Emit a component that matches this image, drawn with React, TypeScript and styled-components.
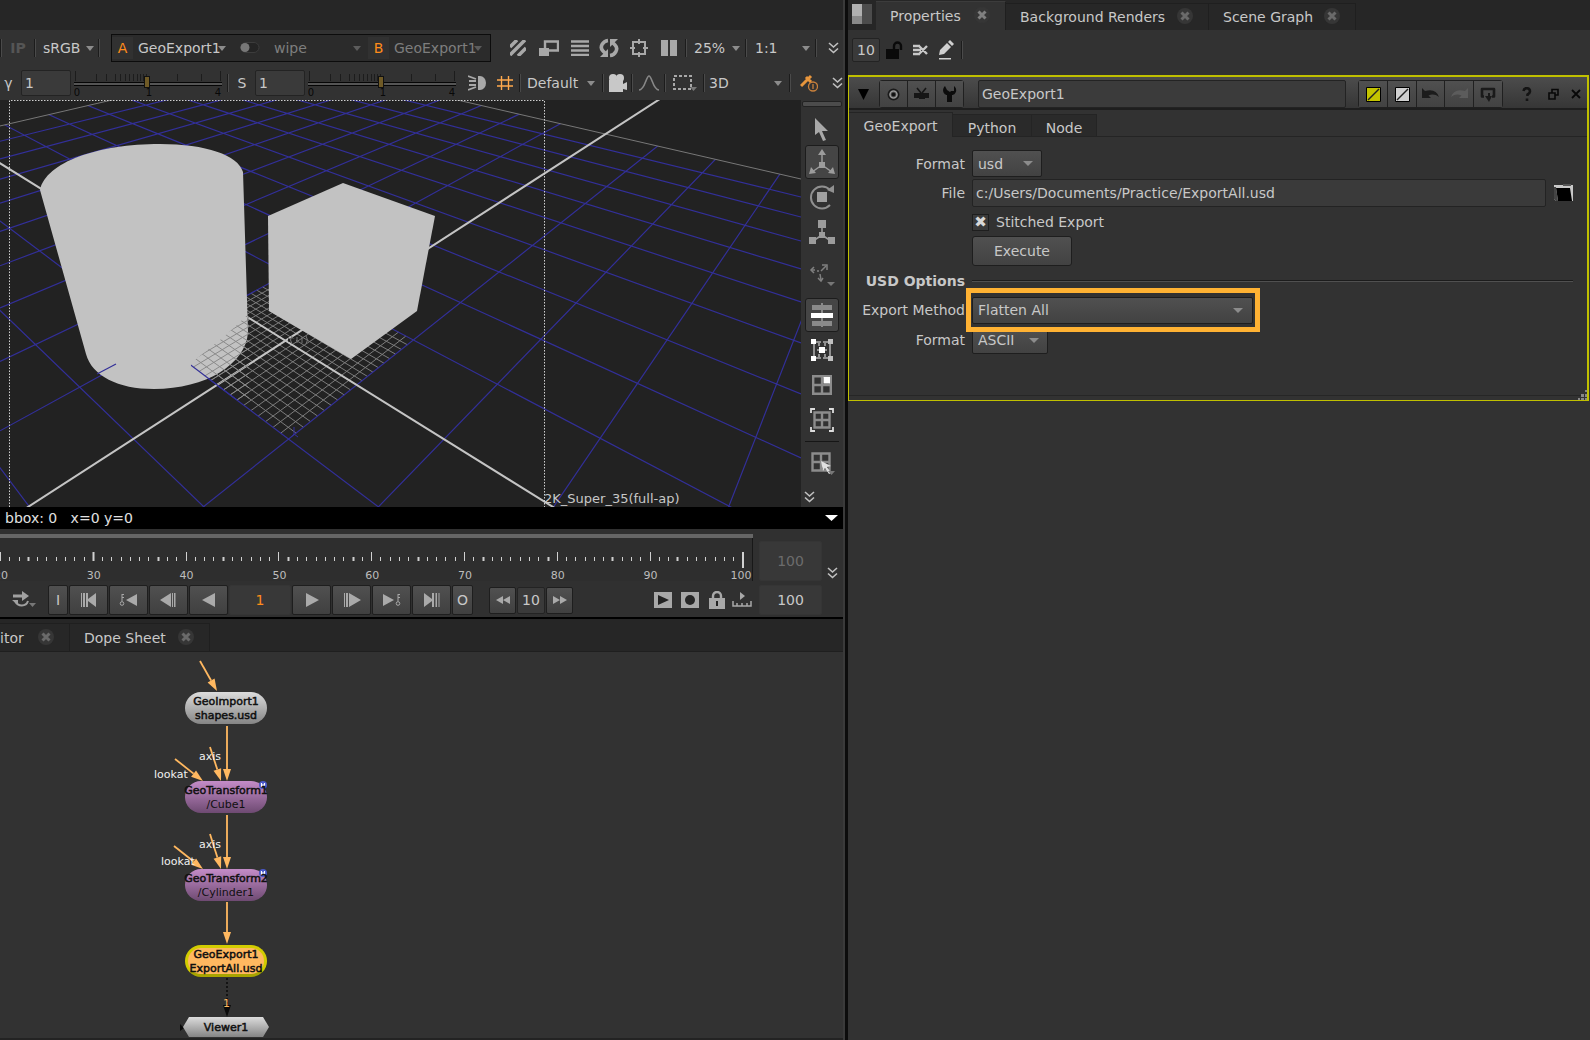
import React from 'react';
import styled, { createGlobalStyle, css } from 'styled-components';

const FONT = '"DejaVu Sans", sans-serif';
const c = {
  bg: '#323232',
  dark: '#262626',
  view: '#222222',
  line: '#1e1e1e',
  text: '#c8c8c8',
  dim: '#7e7e7e',
  icon: '#a8a8a8',
  orange: '#ff8c1a',
  amber: '#ffb860',
  yellow: '#c0c000',
};

const Global = createGlobalStyle`
  * { box-sizing: border-box; }
  body { margin: 0; background: ${c.bg}; color: ${c.text}; font: 14px/20px ${FONT}; overflow: hidden; }
  button, input, select { font: inherit; color: inherit; margin: 0; }
  svg { display: block; flex: none; }
`;

const Page = styled.main`
  display: grid;
  grid-template-columns: minmax(0, 848fr) minmax(0, 742fr);
  min-height: 100vh;
`;
const LeftPane = styled.section`
  display: flex;
  flex-direction: column;
  border-right: 3px solid #0c0c0c;
  box-shadow: inset -2px 0 0 #3a3a3a;
  padding-right: 2px;
  min-width: 0;
`;
const RightPane = styled.section`
  display: flex;
  flex-direction: column;
  min-width: 0;
`;
const TopStrip = styled.div`
  height: 30px;
  background: ${c.dark};
`;
const Toolbar = styled.div<{ $h: number; $pb?: number }>`
  display: flex;
  align-items: center;
  height: ${p => p.$h}px;
  padding-bottom: ${p => p.$pb ?? 0}px;
  background: ${c.bg};
`;
const Slot = styled.div<{ $w: number; $left?: boolean }>`
  display: flex;
  flex: 0 0 ${p => p.$w}px;
  align-items: center;
  justify-content: ${p => (p.$left ? 'flex-start' : 'center')};
`;
const Grow = styled.div`
  flex: 1;
`;
const Sep = styled.div`
  flex: 0 0 2px;
  height: 18px;
  border-left: 1px solid #1c1c1c;
  border-right: 1px solid #4a4a4a;
`;
const IconButton = styled.button<{ $w: number }>`
  display: flex;
  flex: 0 0 ${p => p.$w}px;
  align-items: center;
  justify-content: center;
  height: 28px;
  padding: 0;
  border: 0;
  background: none;
  color: ${c.icon};
`;
const Ghost = styled.span`
  font-weight: bold;
  color: #555;
`;
const InputGroup = styled.div`
  display: flex;
  align-items: center;
  flex: 0 0 380px;
  height: 28px;
  border: 1px solid #0c0c0c;
  background: #2b2b2b;
`;
const Channel = styled.div`
  flex: 0 0 21px;
  height: 22px;
  line-height: 23px;
  text-align: center;
  color: ${c.orange};
  background: #313131;
`;

const SelectBox = styled.span<{ $w: number; $raised?: boolean; $dim?: boolean; $h: number }>`
  display: grid;
  flex: 0 0 ${p => p.$w}px;
  width: ${p => p.$w}px;
  height: ${p => p.$h}px;
  align-items: center;
  color: ${p => (p.$dim ? c.dim : c.text)};
  ${p =>
    p.$raised &&
    css`
      border: 1px solid #1e1e1e;
      border-radius: 2px;
      background: linear-gradient(#505050, #424242);
    `}
`;
const Select = styled.select<{ $pad: number }>`
  grid-area: 1 / 1;
  width: 100%;
  height: 100%;
  appearance: none;
  border: 0;
  padding: 0 0 0 ${p => p.$pad}px;
  background: none;
  text-overflow: clip;
`;
const CaretHold = styled.span<{ $r: number }>`
  grid-area: 1 / 1;
  justify-self: end;
  margin-right: ${p => p.$r}px;
  pointer-events: none;
`;
const Caret = ({ color = '#8c8c8c', w = 8 }: { color?: string; w?: number }) => (
  <svg width={w} height="5" viewBox="0 0 8 5" preserveAspectRatio="none"><path d="M0 0h8L4 5z" fill={color} /></svg>
);
function Drop(p: { id?: string; label?: string; value: string; w: number; h?: number; pad?: number; r?: number; raised?: boolean; dim?: boolean }) {
  return (
    <SelectBox $w={p.w} $h={p.h ?? 26} $raised={p.raised} $dim={p.dim}>
      <Select id={p.id} aria-label={p.label} $pad={p.pad ?? 0} defaultValue={p.value}>
        <option>{p.value}</option>
      </Select>
      <CaretHold $r={p.r ?? 0}><Caret color={p.dim ? '#5c5c5c' : '#8c8c8c'} w={p.raised ? 10 : 8} /></CaretHold>
    </SelectBox>
  );
}

const Field = styled.input<{ $w?: number; $h?: number; $center?: boolean; $tone?: string }>`
  ${p => (p.$w ? css`flex: 0 0 ${p.$w}px; width: ${p.$w}px;` : css`flex: 1; min-width: 0;`)}
  height: ${p => p.$h ?? 26}px;
  border: 1px solid #232323;
  border-radius: 2px;
  padding: 0 3px;
  background: #3a3a3a;
  color: ${p => p.$tone ?? c.text};
  text-align: ${p => (p.$center ? 'center' : 'left')};
`;
const FlatField = styled(Field)`
  border-color: #353535;
  background: #383838;
`;
const SliderBox = styled.div`
  display: grid;
  flex: 0 0 148px;
`;
const SliderArt = styled.svg`
  grid-area: 1 / 1;
`;
const Range = styled.input`
  grid-area: 1 / 1;
  width: 100%;
  height: 28px;
  margin: 0;
  opacity: 0;
`;
function Slider({ label }: { label: string }) {
  const ticks = [1, 22, 32, 41, 46, 51, 55, 59, 63, 66, 69, 72, 103, 127, 146];
  return (
    <SliderBox>
      <SliderArt width="148" height="28" viewBox="0 0 148 28">
        {ticks.map((x, i) => (
          <path key={x} d={`M${x + 0.5} ${i === 0 || x === 146 ? 2 : 5}V12`} stroke="#1c1c1c" />
        ))}
        <path d="M0 13h148v4H0z" fill="#555" />
        <path d="M0 13.500h148M0 16.500h148" stroke="#050505" />
        <rect x="70.500" y="7.500" width="5" height="11" fill="#6f5a26" stroke="#111" />
        <g fontSize="10" fill="#080808" fontFamily={FONT} textAnchor="middle">
          <text x="3" y="27">0</text>
          <text x="75" y="27">1</text>
          <text x="144" y="27">4</text>
        </g>
      </SliderArt>
      <Range type="range" aria-label={label} min={0} max={4} defaultValue={1} />
    </SliderBox>
  );
}

const Chevrons = () => (
  <svg width="11" height="12" viewBox="0 0 11 12" fill="none" stroke="#c0c0c0" strokeWidth="1.600"><path d="M1 1l4.500 4L10 1M1 6.500l4.500 4 4.500-4" /></svg>
);

/* ---------- 3D viewport ---------- */
const ViewerRow = styled.div`
  display: flex;
  height: 407px;
`;
const Viewport = styled.svg`
  flex: 1 1 0;
  min-width: 0;
  height: 407px;
  background: ${c.view};
`;
const ToolColumn = styled.div`
  display: flex;
  flex: 0 0 42px;
  flex-direction: column;
  align-items: center;
  background: ${c.bg};
`;
const Tool = styled.button<{ $on?: boolean; $h: number }>`
  display: flex;
  flex: 0 0 ${p => p.$h}px;
  width: 34px;
  align-items: center;
  justify-content: center;
  padding: 0;
  border: 1px solid ${p => (p.$on ? '#1c1c1c' : 'transparent')};
  border-radius: 3px;
  background: ${p => (p.$on ? '#454545' : 'none')};
`;
const Handle = styled.div`
  flex: 0 0 6px;
  width: 40px;
  margin: 1px 0 6px;
  border-radius: 2px;
  border: 1px solid #222;
  background: #4c4c4c;
`;
const ToolRule = styled.div`
  flex: 0 0 1px;
  width: 34px;
  margin: 3px 0;
  background: #161616;
`;
const Spacer = styled.div<{ $h: number }>`
  flex: 0 0 ${p => p.$h}px;
`;
const MoreTools = styled.button`
  align-self: flex-start;
  padding: 0 0 0 3px;
  border: 0;
  background: none;
`;

/* Ground plane: both line families run to their own vanishing point. */
const VP_U = { x: 965, y: -98 };
const VP_V = { x: -430, y: -104 };
const uY = (u: number) => VP_U.y + 1 / (0.001605 - (u > 0 ? 0.0003 : 0.000286) * u);
const V_EDGE = [661, 544, 458, 394, 343, 302, 269, 241, 217, 197, 179];
function vY(v: number) {
  if (v >= 0) return VP_V.y + 1 / (0.001307 - 0.000232 * v);
  const i = Math.min(9, Math.floor(-v));
  return V_EDGE[i] + (V_EDGE[i + 1] - V_EDGE[i]) * (-v - i);
}
const uSlope = (u: number) => (VP_U.y - uY(u)) / VP_U.x;
const vSlope = (v: number) => (vY(v) - VP_V.y) / (801 - VP_V.x);
function cross(u: number, v: number): [number, number] {
  const a = uSlope(u);
  const b = vSlope(v);
  const x = (uY(u) - VP_V.y + b * VP_V.x) / (b - a);
  return [x, uY(u) + a * x];
}
const uLine = (u: number) => `M0 ${uY(u)}L965 ${VP_U.y}`;
const vLine = (v: number) => `M-430 ${VP_V.y}L801 ${vY(v)}`;
const seg = (a: [number, number], b: [number, number]) => `M${a[0]} ${a[1]}L${b[0]} ${b[1]}`;
const range = (a: number, b: number) => Array.from({ length: b - a + 1 }, (_, i) => a + i);

function Scene() {
  const far = cross(-10, -10);
  const blueU = range(-9, 4).filter(u => u !== 0).map(uLine).join('');
  const blueV = range(-9, 4).filter(v => v !== 0).map(vLine).join('');
  const fine = range(-9, 9)
    .map(i => i / 10)
    .map(t => seg(cross(t, -1), cross(t, 1)) + seg(cross(-1, t), cross(1, t)))
    .join('');
  return (
    <Viewport viewBox="0 100 801 407" preserveAspectRatio="xMinYMin slice" role="img" aria-label="3D view">
      <defs>
        <clipPath id="floor">
          <path d={`M0 ${uY(-10)}L${far[0]} ${far[1]}L801 ${vY(-10)}V507H0z`} />
        </clipPath>
        <clipPath id="front">
          <path d="M191 363L220 340 236 326 249 313V400H190z" />
        </clipPath>
      </defs>
      <g clipPath="url(#floor)" fill="none">
        <path d={fine} stroke="#7c7c7c" strokeWidth="1" />
        <path d={blueU + blueV} stroke="#322f98" strokeWidth="1.200" />
      </g>
      <path d={uLine(-10) + vLine(-10)} stroke="#777" />
      <path d={uLine(0) + vLine(0)} stroke="#c4c4c4" strokeWidth="2" />
      <g fill="#c2c2c2">
        <path d="M40 190C46 162 98 144 160 144C206 144 238 155 243 172L248 332C246 364 206 389 154 389C118 389 92 376 86 354Z" />
        <path d="M343 183L435 216 417 311 351 359 269 311 268 216Z" />
      </g>
      <g clipPath="url(#front)" fill="none">
        <path d={fine} stroke="#8a8a8a" />
        <path d={vLine(1)} stroke="#322f98" strokeWidth="1.200" />
      </g>
      <path d="M97 374L116 364" stroke="#322f98" strokeWidth="1.200" />
      <path d="M294 427V434L291 437M298 437L294 434" stroke="#322f98" fill="none" />
      <path d="M288 340h8" stroke={c.view} strokeWidth="3" />
      <path d="M292 336q-3 4 0 8M297 337v6M302 337v6M306 336q3 4 0 8" stroke="#777" fill="none" />
      <path d="M9.500 507V100.500H544.500V507" fill="none" stroke="#d0d0d0" strokeDasharray="1.500 1.500" />
      <text x="544" y="503" fontSize="13" fill={c.text} fontFamily={FONT}>2K_Super_35(full-ap)</text>
    </Viewport>
  );
}

const StatusBar = styled.div`
  display: flex;
  align-items: center;
  justify-content: space-between;
  height: 22px;
  padding: 0 5px;
  background: #000;
  color: #e0e0e0;
  white-space: pre;
`;

/* ---------- timeline ---------- */
const Timeline = styled.div`
  display: grid;
  grid-template-columns: minmax(0, 753fr) 70px 20px;
  grid-template-rows: 54px 34px;
  align-items: center;
  border-bottom: 2px solid #000;
  background: #303030;
  height: 90px;
`;
const RulerSvg = styled.svg`
  width: 100%;
  height: 54px;
`;
const RangeCell = styled.div<{ $top?: number }>`
  display: flex;
  padding: ${p => p.$top ?? 0}px 0 0 6px;
`;
const MoreCell = styled.div`
  grid-column: 3;
  grid-row: 1 / 3;
  padding-left: 4px;
`;
const Transport = styled.div`
  display: flex;
  align-items: center;
  height: 34px;
  gap: 1px;
`;
const Key = styled.button<{ $w: number; $h?: number }>`
  display: flex;
  flex: 0 0 ${p => p.$w}px;
  align-items: center;
  justify-content: center;
  height: ${p => p.$h ?? 30}px;
  padding: 0;
  border: 1px solid #1e1e1e;
  border-radius: 2px;
  background: linear-gradient(#505050, #404040);
`;
function Ruler() {
  const labels = [30, 40, 50, 60, 70, 80, 90];
  return (
    <RulerSvg viewBox="0 0 753 54" preserveAspectRatio="none">
      <path d="M0 5h753v4H0z" fill="#666" />
      <path d="M0 9h752v43H0z" fill="#2e2e2e" />
      <path d="M752.500 9V52" stroke="#181818" />
      {range(0, 79).map(i => {
        const major = i % 10 === 0;
        return <path key={i} d={`M${Math.round(i * 9.28) + 0.5} ${major ? 23 : 28}V32`} stroke="#d0d0d0" strokeWidth={i % 7 === 3 ? 2 : 1} />;
      })}
      <path d="M743 23V39" stroke="#d0d0d0" strokeWidth="2" />
      <g fontSize="11" fill="#bdbdbd" fontFamily={FONT} textAnchor="middle">
        <text x="1" y="50">20</text>
        {labels.map(n => <text key={n} x={(n - 20) * 9.28 + 1} y="50">{n}</text>)}
        <text x="741" y="50">100</text>
      </g>
    </RulerSvg>
  );
}
const Glyph = ({ d, w = 20, extra }: { d: string; w?: number; extra?: React.ReactNode }) => (
  <svg width={w} height="14" viewBox={`0 0 ${w} 14`} fill="#aaaaaa" stroke="none"><path d={d} />{extra}</svg>
);
const keyMark = (x: number) => (
  <g fill="none" stroke="#a8a8a8"><circle cx={x} cy="10.500" r="1.800" /><path d={`M${x} 8.500V1M${x} 1.500h2M${x} 4.500h2`} /></g>
);

/* ---------- tabs ---------- */
const TabBar = styled.div<{ $h: number }>`
  display: flex;
  align-items: flex-end;
  height: ${p => p.$h}px;
  background: ${c.dark};
`;
const Tab = styled.button<{ $w: number; $on?: boolean; $h: number; $l?: number }>`
  display: flex;
  align-items: center;
  justify-content: space-between;
  flex: 0 0 ${p => p.$w}px;
  height: ${p => p.$h}px;
  padding: 0 14px 0 ${p => p.$l ?? 14}px;
  border: 0;
  border-right: 1px solid #1f1f1f;
  border-top: 1px solid ${p => (p.$on ? '#3c3c3c' : '#1f1f1f')};
  background: ${p => (p.$on ? c.bg : '#272727')};
  white-space: nowrap;
`;
const TabClose = ({ on }: { on?: boolean }) => (
  <svg width="18" height="18" viewBox="0 0 18 18">
    <circle cx="9" cy="8" r="8" fill="#363636" />
    <path d="M5.500 4.500l7 7M12.500 4.500l-7 7" stroke={on ? '#808080' : '#6a6a6a'} strokeWidth="3" />
  </svg>
);

/* ---------- node graph ---------- */
const Graph = styled.div`
  position: relative;
  flex: 1;
  min-height: 387px;
  overflow: hidden;
  background: ${c.bg};
  border-top: 1px solid #1f1f1f;
  border-bottom: 2px solid #232323;
`;
const Wires = styled.svg`
  position: absolute;
  left: 0;
  top: 0;
`;
const tones = {
  grey: css`background: linear-gradient(#dcdcdc, #858585);`,
  purple: css`background: linear-gradient(#c48cc8, #6e4a72);`,
  gold: css`background: #ffb860; border: 3px solid #d2cc00; border-bottom-color: #a8a400;`,
};
const Node = styled.div<{ $x: number; $y: number; $tone: keyof typeof tones }>`
  position: absolute;
  left: ${p => p.$x}px;
  top: ${p => p.$y}px;
  display: flex;
  flex-direction: column;
  align-items: center;
  justify-content: center;
  width: 82px;
  height: 32px;
  padding-top: 2px;
  border-radius: 16px;
  ${p => tones[p.$tone]}
  color: #101010;
  font-size: 11px;
  line-height: 14px;
  -webkit-text-stroke: 0.5px #101010;
  white-space: nowrap;
`;
const NodeText = styled.span`
  z-index: 1;
`;
const Sub = styled.span`
  -webkit-text-stroke: 0;
`;
const Viewer = styled(Node)`
  width: 86px;
  height: 20px;
  border-radius: 0;
  clip-path: polygon(6px 0, 80px 0, 100% 50%, 80px 100%, 6px 100%, 0 50%);
`;
const WireLabel = styled.span<{ $x: number; $y: number; $tone?: string }>`
  position: absolute;
  left: ${p => p.$x}px;
  top: ${p => p.$y}px;
  font-size: 11px;
  line-height: 14px;
  color: ${p => p.$tone ?? '#f0f0f0'};
`;
const BadgeSpot = styled.span`
  position: absolute;
  right: 0;
  top: 0;
`;
const Badge = () => (
  <BadgeSpot>
    <svg width="8" height="8" viewBox="0 0 8 8"><circle cx="4" cy="4" r="4" fill="#4a58c8" /><path d="M2.500 2v4M5.500 2v4M2.500 4h3" stroke="#fff" strokeWidth="1.200" /></svg>
  </BadgeSpot>
);
function arrow(x1: number, y1: number, x2: number, y2: number) {
  const n = Math.hypot(x2 - x1, y2 - y1);
  const dx = (x2 - x1) / n;
  const dy = (y2 - y1) / n;
  const bx = x2 - dx * 12;
  const by = y2 - dy * 12;
  return { line: `M${x1} ${y1}L${bx} ${by}`, head: `M${x2} ${y2}L${bx - dy * 4} ${by + dx * 4}L${bx + dy * 4} ${by - dx * 4}z` };
}
const wires = [
  arrow(200, 9, 217, 39),
  arrow(227, 74, 227, 129),
  arrow(210, 95, 221, 129),
  arrow(175, 107, 203, 129),
  arrow(227, 163, 227, 217),
  arrow(210, 182, 221, 217),
  arrow(174, 194, 203, 217),
  arrow(227, 250, 227, 292),
];

/* ---------- properties panel ---------- */
const Panel = styled.section`
  display: flex;
  flex-direction: column;
  border: 2px solid ${c.yellow};
  border-left-width: 1px;
  border-bottom-width: 1px;
  height: 326px;
  margin-right: 1px;
`;
const TitleBar = styled.div`
  display: flex;
  align-items: center;
  height: 33px;
  padding-top: 3px;
  border-bottom: 2px solid #1e1e1e;
  background: linear-gradient(#4c4c4c, #363636);
`;
const ButtonRun = styled.div`
  display: flex;
  border: 1px solid #202020;
  border-radius: 3px;
  height: 28px;
`;
const RunButton = styled.button<{ $w: number }>`
  display: flex;
  align-items: center;
  justify-content: center;
  flex: 0 0 ${p => p.$w}px;
  padding: 0;
  border: 0;
  background: linear-gradient(#505050, #424242);
  & + & { border-left: 1px solid #202020; }
`;
const NameField = styled(Field)`
  height: 28px;
  margin: 0 12px 0 14px;
  background: #3b3b3b;
`;
const InnerTabs = styled.div`
  display: flex;
  align-items: flex-end;
  height: 27px;
  border-bottom: 1px solid #242424;
`;
const InnerTab = styled.button<{ $w: number; $on?: boolean }>`
  flex: 0 0 ${p => p.$w}px;
  height: ${p => (p.$on ? 25 : 22)}px;
  padding: ${p => (p.$on ? 1 : 3)}px 0 0;
  margin-bottom: ${p => (p.$on ? -1 : 0)}px;
  border: 1px solid #242424;
  border-bottom: 0;
  border-left: 0;
  background: ${p => (p.$on ? c.bg : '#2a2a2a')};
`;
const Form = styled.form`
  display: grid;
  grid-template-columns: 116px minmax(0, 1fr);
  grid-template-rows: 29px 30px 28px 30px 29px 30px 30px;
  column-gap: 7px;
  align-items: center;
  padding: 12px 14px 0 0;
  flex: 1;
`;
const Label = styled.label`
  text-align: right;
  white-space: nowrap;
`;
const Heading = styled.h2`
  margin: 0;
  font-size: 14px;
  line-height: 20px;
  text-align: right;
  white-space: nowrap;
`;
const Rule = styled.hr`
  width: 100%;
  margin: 0;
  border: 0;
  border-top: 1px solid #1c1c1c;
  border-bottom: 1px solid #505050;
`;
const FileRow = styled.div`
  display: flex;
  align-items: center;
  gap: 8px;
`;
const CheckRow = styled.div`
  display: flex;
  align-items: center;
  gap: 7px;
`;
const Check = styled.input`
  appearance: none;
  display: grid;
  place-items: center;
  width: 17px;
  height: 17px;
  border: 1px solid #1e1e1e;
  background: #3a3a3a;
  &:checked::before {
    content: '✖';
    font-size: 15px;
    line-height: 15px;
    color: #d8d8d8;
  }
`;
const Execute = styled.button`
  width: 100px;
  height: 30px;
  padding: 0;
  border: 1px solid #1e1e1e;
  border-radius: 3px;
  background: linear-gradient(#505050, #424242);
`;
const Highlight = styled.div`
  position: relative;
  width: 281px;
  &::after {
    content: '';
    position: absolute;
    inset: -9px -7px -8px -6px;
    border: 5px solid #ffb233;
    pointer-events: none;
  }
`;
const GripRow = styled.div`
  display: flex;
  justify-content: flex-end;
  height: 5px;
  border-top: 1px solid #262626;
`;
const Grip = styled.svg`
  margin-top: -6px;
`;

export default function App() {
  return (
    <Page>
      <Global />
      <LeftPane>
        <TopStrip />
        <Toolbar $h={36}>
          <Sep />
          <Slot $w={32}><Ghost>IP</Ghost></Slot>
          <Sep />
          <Slot $w={7} />
          <Drop label="Display" value="sRGB" w={51} />
          <Slot $w={4} />
          <Sep />
          <Slot $w={11} />
          <InputGroup>
            <Channel>A</Channel>
            <Slot $w={5} />
            <Drop label="Input A" value="GeoExport1" w={88} />
            <Slot $w={48}>
              <svg width="20" height="12" viewBox="0 0 20 12"><rect x="1" y=".5" width="18" height="10" rx="5" fill="#242424" stroke="#3c3c3c" /><circle cx="5" cy="5.500" r="4.500" fill="#777" /></svg>
            </Slot>
            <Drop label="Wipe" value="wipe" w={87} dim />
            <Slot $w={7} />
            <Channel>B</Channel>
            <Slot $w={5} />
            <Drop label="Input B" value="GeoExport1" w={88} dim />
          </InputGroup>
          <Slot $w={12} />
          <IconButton $w={30} aria-label="Clipping"><svg width="16" height="16" viewBox="0 0 16 16" stroke={c.icon} strokeWidth="3.500"><path d="M0 7L7 0M0 15L15 0M8 16l8-8" /></svg></IconButton>
          <IconButton $w={32} aria-label="Overlay"><svg width="20" height="16" viewBox="0 0 20 16"><path d="M6 1.500h13v9H6z" fill="none" stroke={c.icon} strokeWidth="2.400" /><path d="M0 8h10v8H0z" fill={c.icon} /></svg></IconButton>
          <IconButton $w={30} aria-label="Lines"><svg width="18" height="16" viewBox="0 0 18 16" stroke={c.icon} strokeWidth="2.400"><path d="M0 1.500h18M0 6h18M0 10.500h18M0 15h18" /></svg></IconButton>
          <IconButton $w={28} aria-label="Refresh"><svg width="20" height="20" viewBox="0 0 20 20" fill="none" stroke={c.icon} strokeWidth="3.600"><path d="M9 2.500C4 3 0 9 4 13L6 15M11 17.500c5-.5 9-6.500 5-10.500L14 5" /><path d="M9 11v8H1z M11 9V1h8z" fill={c.icon} stroke="none" /></svg></IconButton>
          <IconButton $w={31} aria-label="Region"><svg width="18" height="18" viewBox="0 0 18 18" fill="none" stroke={c.icon} strokeWidth="2"><path d="M3 3h12v12H3zM9 0v5M9 13v5M0 9h5M13 9h5" /></svg></IconButton>
          <IconButton $w={29} aria-label="Pause"><svg width="16" height="16" viewBox="0 0 16 16" fill={c.icon}><path d="M0 0h7v16H0zM9 0h7v16H9z" /></svg></IconButton>
          <Slot $w={2} />
          <Sep />
          <Slot $w={7} />
          <Drop label="Zoom" value="25%" w={46} />
          <Slot $w={5} />
          <Sep />
          <Slot $w={8} />
          <Drop label="Ratio" value="1:1" w={55} />
          <Slot $w={5} />
          <Sep />
          <Grow />
          <IconButton $w={20} aria-label="More"><Chevrons /></IconButton>
        </Toolbar>
        <Toolbar $h={34}>
          <Slot $w={17}><label htmlFor="gamma">γ</label></Slot>
          <Slot $w={4} />
          <Field id="gamma" $w={50} defaultValue="1" />
          <Slot $w={3} />
          <Slider label="Gamma slider" />
          <Slot $w={5} />
          <Sep />
          <Slot $w={26}><label htmlFor="sat">S</label></Slot>
          <Field id="sat" $w={50} defaultValue="1" />
          <Slot $w={3} />
          <Slider label="Saturation slider" />
          <IconButton $w={41} aria-label="Light"><svg width="18" height="16" viewBox="0 0 18 16" fill={c.icon}><path d="M10 1h2a6 7 0 010 14h-2z" /><path d="M0 1l8 3M1 6h7M1 10h7M0 15l8-3" stroke={c.icon} strokeWidth="1.800" /></svg></IconButton>
          <IconButton $w={16} aria-label="Grid"><svg width="16" height="14" viewBox="0 0 16 14" stroke="#ffa94d" strokeWidth="1.400"><path d="M0 4h16M0 10h16M4.500 0v14M11.500 0v14" /></svg></IconButton>
          <Slot $w={6} />
          <Sep />
          <Slot $w={6} />
          <Drop label="Shading" value="Default" w={68} />
          <Slot $w={7} />
          <Sep />
          <IconButton $w={27} aria-label="Camera"><svg width="19" height="18" viewBox="0 0 19 18" fill="#c8c8c8"><circle cx="5" cy="4" r="4" /><circle cx="12" cy="4" r="4" /><path d="M1 6h14v4l4-2v8l-4-1v3H1z" /></svg></IconButton>
          <Sep />
          <IconButton $w={31} aria-label="Curve"><svg width="20" height="16" viewBox="0 0 20 16" fill="none" stroke="#888" strokeWidth="1.600"><path d="M0 15C6 15 7 1 10 1s4 14 10 14" /></svg></IconButton>
          <Sep />
          <IconButton $w={37} aria-label="Marquee"><svg width="24" height="18" viewBox="0 0 24 18"><path d="M1 2h17v13H1z" fill="none" stroke={c.icon} strokeWidth="2" strokeDasharray="3 2" /><path d="M17 13h7l-3.500 4z" fill="#777" /></svg></IconButton>
          <Sep />
          <Slot $w={4} />
          <Drop label="View mode" value="3D" w={73} />
          <Slot $w={7} />
          <Sep />
          <IconButton $w={36} aria-label="Color picker"><svg width="18" height="18" viewBox="0 0 18 18"><path d="M1 12l6-6M6 3l5 5M8 5l3-3" stroke="#e8963c" strokeWidth="3" fill="none" /><circle cx="13" cy="12.500" r="4.500" fill={c.bg} stroke="#c8803c" strokeWidth="1.300" /><path d="M13 10v5" stroke="#c8803c" strokeWidth="1.300" /></svg></IconButton>
          <Grow />
          <IconButton $w={12} aria-label="More"><Chevrons /></IconButton>
        </Toolbar>
        <ViewerRow>
          <Scene />
          <ToolColumn>
            <Handle />
            <Tool $h={32} aria-label="Select"><svg width="15" height="23" viewBox="0 0 15 23"><path d="M0 0v17l4-3 4 9 3-1-4-9h6z" fill={c.icon} /></svg></Tool>
            <Tool $h={34} $on aria-label="Translate"><svg width="28" height="28" viewBox="0 0 28 28" stroke="#9c9c9c" fill="#9c9c9c"><path d="M14 3v14M14 17L4 24M14 17l10 7" strokeWidth="1.500" /><path d="M14 1l4 6h-8zM1 26l2-7 5 6zM27 26l-2-7-5 6zM11 14h6v6h-6z" stroke="none" /></svg></Tool>
            <Tool $h={36} aria-label="Rotate"><svg width="26" height="26" viewBox="0 0 26 26"><path d="M21 6A11 11 0 1021 21" fill="none" stroke="#909090" strokeWidth="2" /><path d="M18 6l7-5v8z" fill="#909090" /><path d="M8 8h10v10H8z" fill="#a0a0a0" /></svg></Tool>
            <Tool $h={34} aria-label="Scale"><svg width="26" height="26" viewBox="0 0 26 26" fill="#9c9c9c"><path d="M9 1h8v8H9zM0 18h7v7H0zM19 18h7v7h-7zM10 13h6v6h-6z" /><path d="M13 8v8M13 16l-9 6M13 16l9 6" stroke="#9c9c9c" strokeWidth="1.600" /></svg></Tool>
            <Spacer $h={9} />
            <Tool $h={34} aria-label="Skew"><svg width="26" height="22" viewBox="0 0 26 22" fill="none" stroke="#808080" strokeWidth="1.500"><path d="M3 6h3M8 7h2M12 7l5-5M11 10l1 6" /><path d="M5 3L2 6l3 3M13 1h5v5M9 14l3 3 2-3" /><path d="M18 18h8l-4 4z" fill="#777" stroke="none" /></svg></Tool>
            <Spacer $h={6} />
            <Tool $h={34} $on aria-label="Object"><svg width="22" height="24" viewBox="0 0 22 24" fill="#8a8a8a"><path d="M1 2h20v5H1zM1 18h20v5H1z" /><path d="M10 0h2v24h-2z" /><path d="M0 10h22v5H0z" fill="#fff" /></svg></Tool>
            <Tool $h={36} aria-label="Vertices"><svg width="24" height="24" viewBox="0 0 24 24"><path d="M4 6v12M20 6v12M6 4h5M13 4h5M6 20h5M13 20h5M9 3v5M15 3v5M9 16v5M15 16v5M7 12h10" fill="none" stroke="#909090" strokeWidth="2" /><path d="M1 1h5v5H1zM1 18h5v5H1zM9 9h6v6H9z" fill="#fff" /><path d="M18 1h5v5h-5zM18 18h5v5h-5z" fill="#c0c0c0" /></svg></Tool>
            <Tool $h={34} aria-label="Faces"><svg width="20" height="20" viewBox="0 0 20 20" fill="none" stroke="#8c8c8c" strokeWidth="2.400"><path d="M1.200 1.200h17.600v17.600H1.200zM10 1v18M1 10h18" /><path d="M11.500 2h6.500v6.500h-6.500z" fill="#fff" stroke="none" /></svg></Tool>
            <Tool $h={36} aria-label="Bounds"><svg width="24" height="24" viewBox="0 0 24 24" fill="none"><path d="M4.500 4.500h15v15h-15zM12 4v16M4 12h16" stroke="#8c8c8c" strokeWidth="2.400" /><path d="M5 1H1v4M19 1h4v4M5 23H1v-4M19 23h4v-4" stroke="#ddd" strokeWidth="1.800" /></svg></Tool>
            <ToolRule />
            <Tool $h={36} aria-label="Pick"><svg width="26" height="24" viewBox="0 0 26 24" fill="none"><path d="M3.500 2.500h17v17h-17zM12 2v18M3 11h18" stroke="#8c8c8c" strokeWidth="2.400" /><path d="M12 10l10 5-4 1 4 6-2 1-4-6-2 3z" fill="#e0e0e0" /><path d="M19 20h7l-3.500 4z" fill="#777" /></svg></Tool>
            <Spacer $h={10} />
            <MoreTools aria-label="More tools"><Chevrons /></MoreTools>
          </ToolColumn>
        </ViewerRow>
        <StatusBar>
          <span>bbox: 0   x=0 y=0</span>
          <svg width="13" height="6" viewBox="0 0 13 6"><path d="M0 0h13L6.500 6z" fill="#fff" /></svg>
        </StatusBar>
        <Timeline>
          <Ruler />
          <RangeCell $top={10}><FlatField $w={63} $h={40} $center $tone="#6c6c6c" aria-label="Range end" defaultValue="100" /></RangeCell>
          <MoreCell><Chevrons /></MoreCell>
          <Transport>
            <IconButton $w={47} aria-label="Loop"><svg width="24" height="18" viewBox="0 0 24 18" fill="none" stroke="#a0a0a0" strokeWidth="2"><path d="M1 5h10" strokeWidth="3" /><path d="M3 10c3 6 11 6 13 0" /><path d="M10 0l7 5-7 5z" fill="#a0a0a0" stroke="none" /><path d="M0 9h6v5z" fill="#a0a0a0" stroke="none" /><path d="M17 12h7l-3.500 4z" fill="#777" stroke="none" /></svg></IconButton>
            <Key $w={20}>I</Key>
            <Key $w={39} aria-label="First"><Glyph d="M2 0h1v14H2zM4 0h2v14H4zM7 0h2v6l8-6v14L9 8v6H7z" /></Key>
            <Key $w={39} aria-label="Previous key"><Glyph d="M18 1v12L7 7z" extra={keyMark(3)} /></Key>
            <Key $w={39} aria-label="Step back"><Glyph d="M12 0v14L1 7zM13 0h1v14h-1zM15 0h1.500v14h-1.500z" /></Key>
            <Key $w={39} aria-label="Play back"><Glyph d="M16 0v14L3 7z" /></Key>
            <FlatField $w={62} $h={30} $center $tone={c.orange} aria-label="Frame" defaultValue="1" />
            <Key $w={39} aria-label="Play"><Glyph d="M4 0v14l13-7z" /></Key>
            <Key $w={39} aria-label="Step forward"><Glyph d="M7 0v14l12-7zM2 0h1v14H2zM4 0h2v14H4z" /></Key>
            <Key $w={39} aria-label="Next key"><Glyph d="M1 1v12l11-6z" extra={keyMark(16)} /></Key>
            <Key $w={39} aria-label="Last"><Glyph d="M2 0v14l8-6v6h2V0h-2v6zM13.500 0h1.500v14h-1.500zM16.500 0h1v14h-1z" /></Key>
            <Key $w={21}>O</Key>
            <Slot $w={14} />
            <Key $w={27} $h={27} aria-label="Skip back"><Glyph w={14} d="M7 3v8L0 7zM14 3v8L7 7z" /></Key>
            <Field $w={28} $h={27} $center aria-label="Increment" defaultValue="10" />
            <Key $w={27} $h={27} aria-label="Skip forward"><Glyph w={14} d="M0 3v8l7-4zM7 3v8l7-4z" /></Key>
            <Grow />
            <IconButton $w={26} aria-label="Flipbook"><svg width="18" height="16" viewBox="0 0 18 16"><path d="M0 0h18v16H0z" fill={c.icon} /><path d="M4 3l11 5-11 5z" fill="#222" /></svg></IconButton>
            <IconButton $w={26} aria-label="Capture"><svg width="18" height="16" viewBox="0 0 18 16"><path d="M0 0h18v16H0z" fill={c.icon} /><circle cx="9" cy="8" r="5" fill="#262626" /></svg></IconButton>
            <IconButton $w={26} aria-label="Lock range"><svg width="16" height="18" viewBox="0 0 16 18"><path d="M4 8V5a4 4 0 018 0v3" fill="none" stroke={c.icon} strokeWidth="2.400" /><path d="M0 7h16v11H0z" fill={c.icon} /><path d="M7 10h2v5H7z" fill="#222" /></svg></IconButton>
            <IconButton $w={22} aria-label="Playhead"><svg width="20" height="16" viewBox="0 0 20 16"><path d="M8 0l5 4-5 4z" fill={c.icon} /><path d="M1 9v5h18V9M5 11v3M10 11v3M15 11v3" fill="none" stroke={c.icon} strokeWidth="1.500" /></svg></IconButton>
          </Transport>
          <RangeCell><FlatField $w={63} $h={30} $center aria-label="Total frames" defaultValue="100" /></RangeCell>
        </Timeline>
        <TabBar $h={32}>
          <Tab $w={70} $h={28} $l={0}>itor<TabClose /></Tab>
          <Tab $w={140} $h={28}>Dope Sheet<TabClose /></Tab>
        </TabBar>
        <Graph>
          <Wires width="300" height="387" viewBox="0 0 300 387">
            {wires.map((w, i) => (
              <g key={i}><path d={w.line} stroke={c.amber} strokeWidth="1.800" /><path d={w.head} fill={c.amber} /></g>
            ))}
            <path d="M227 326V354" stroke="#0a0a0a" strokeWidth="1.500" strokeDasharray="2 2" />
            <path d="M223 353h8l-4 12zM180 372l4 4-4 3z" fill="#0a0a0a" />
          </Wires>
          <WireLabel $x={199} $y={98}>axis</WireLabel>
          <WireLabel $x={154} $y={116}>lookat</WireLabel>
          <WireLabel $x={199} $y={186}>axis</WireLabel>
          <WireLabel $x={161} $y={203}>lookat</WireLabel>
          <WireLabel $x={223} $y={345} $tone={c.amber}>1</WireLabel>
          <Node $x={185} $y={40} $tone="grey"><span>GeoImport1</span><span>shapes.usd</span></Node>
          <Node $x={185} $y={129} $tone="purple"><Badge /><NodeText>GeoTransform1</NodeText><Sub>/Cube1</Sub></Node>
          <Node $x={185} $y={217} $tone="purple"><Badge /><NodeText>GeoTransform2</NodeText><Sub>/Cylinder1</Sub></Node>
          <Node $x={185} $y={293} $tone="gold"><span>GeoExport1</span><span>ExportAll.usd</span></Node>
          <Viewer $x={183} $y={365} $tone="grey"><span>Viewer1</span></Viewer>
        </Graph>
      </LeftPane>

      <RightPane>
        <TabBar $h={30}>
          <Slot $w={28} $left>
            <svg width="28" height="26" viewBox="0 0 28 26"><path d="M4 0h10v12H4z" fill="#b0b0b0" /><path d="M4 12h10v8H4z" fill="#8a8a8a" /><path d="M14 0h10v20H14z" fill="#4c4c4c" /></svg>
          </Slot>
          <Tab $w={130} $h={29} $on>Properties<TabClose on /></Tab>
          <Tab $w={203} $h={27}>Background Renders<TabClose /></Tab>
          <Tab $w={147} $h={27}>Scene Graph<TabClose /></Tab>
        </TabBar>
        <Toolbar $h={45} $pb={5}>
          <Slot $w={4} />
          <Field $w={28} $h={24} $center aria-label="Max panels" defaultValue="10" />
          <IconButton $w={29} aria-label="Lock"><svg width="17" height="18" viewBox="0 0 17 18"><path d="M8 8V5a3.500 3.500 0 017 0v4" fill="none" stroke="#0a0a0a" strokeWidth="2.400" /><path d="M0 8h13v10H0z" fill="#0a0a0a" /></svg></IconButton>
          <IconButton $w={23} aria-label="Clear"><svg width="15" height="12" viewBox="0 0 15 12" fill="none" stroke="#c8c8c8" strokeWidth="2.400"><path d="M0 2h7M0 6h8M0 10h7M6 2l8 8M14 2L6 10" /></svg></IconButton>
          <IconButton $w={29} aria-label="Edit"><svg width="17" height="20" viewBox="0 0 17 20" fill="#d0d0d0"><path d="M1 15l1-5 7-7 4 4-7 7zM10 2l2-2 4 4-2 2zM1 18h12v1.500H1z" /></svg></IconButton>
          <Sep />
        </Toolbar>
        <Panel>
          <TitleBar>
            <IconButton $w={28} aria-label="Collapse"><svg width="11" height="11" viewBox="0 0 11 11"><path d="M0 0h11L5.500 11z" fill="#000" /></svg></IconButton>
            <Slot $w={2} />
            <ButtonRun>
              <RunButton $w={27} aria-label="Center"><svg width="13" height="13" viewBox="0 0 13 13"><circle cx="6.500" cy="6.500" r="4.500" fill="none" stroke="#1a1a1a" strokeWidth="3" /><circle cx="6.500" cy="6.500" r="3.500" fill="none" stroke="#999" strokeWidth="1.600" /><circle cx="6.500" cy="6.500" r="1.800" fill="#111" /></svg></RunButton>
              <RunButton $w={28} aria-label="Scripts"><svg width="15" height="14" viewBox="0 0 15 14" fill="#161616"><path d="M0 6h15v5h-4v1H5v-1H0z" /><path d="M3 1l4 5M12 1L8 6" stroke="#161616" strokeWidth="1.600" /></svg></RunButton>
              <RunButton $w={28} aria-label="Tools"><svg width="15" height="18" viewBox="0 0 15 18"><path d="M3 1C-1 5 2 10 5 10v7h5v-7c4 0 6-6 2-9v5H9L8 7 5 5z" fill="#0c0c0c" /></svg></RunButton>
            </ButtonRun>
            <NameField aria-label="Node name" defaultValue="GeoExport1" />
            <ButtonRun>
              <RunButton $w={28} aria-label="Node color"><svg width="15" height="15" viewBox="0 0 15 15"><path d="M.5.5h14v14H.5z" fill="#c4c400" stroke="#000" /><path d="M2 13L13 2" stroke="#222" strokeWidth="1.400" /></svg></RunButton>
              <RunButton $w={29} aria-label="Control color"><svg width="15" height="15" viewBox="0 0 15 15"><path d="M.5.5h14v14H.5z" fill="#d0d0d0" stroke="#000" /><path d="M2 13L13 2" stroke="#222" strokeWidth="1.400" /></svg></RunButton>
              <RunButton $w={28} aria-label="Undo"><svg width="18" height="12" viewBox="0 0 18 12"><path d="M0 0v10h9L6.500 7.500Q12 5 17 9Q14 0 3 3z" fill="#1c1c1c" /></svg></RunButton>
              <RunButton $w={29} aria-label="Redo"><svg width="18" height="12" viewBox="0 0 18 12"><path d="M18 0v10h-9l2.500-2.500Q6 5 1 9Q4 0 15 3z" fill="#5c5c5c" /></svg></RunButton>
              <RunButton $w={29} aria-label="Revert"><svg width="16" height="15" viewBox="0 0 16 15"><path d="M4 9.500H2V2h12v7.500h-2" fill="none" stroke="#1a1a1a" strokeWidth="2.600" strokeLinejoin="round" /><path d="M5 9h7l-3 6z" fill="#1a1a1a" /><path d="M8 6h2v5H8z" fill="#1a1a1a" /></svg></RunButton>
            </ButtonRun>
            <Slot $w={12} />
            <IconButton $w={24} aria-label="Help"><svg width="10" height="14" viewBox="0 0 10 14"><path d="M1.500 4Q2 1 5 1.200T8 4.500Q8 6 5.500 7.500V9M5 11.500V14" fill="none" stroke="#141414" strokeWidth="2.600" /></svg></IconButton>
            <IconButton $w={28} aria-label="Float"><svg width="11" height="12" viewBox="0 0 11 12" fill="none" stroke="#080808" strokeWidth="1.600"><path d="M1 5h6v6H1zM4 5V1.500h6V7H7" /></svg></IconButton>
            <IconButton $w={18} aria-label="Close"><svg width="10" height="10" viewBox="0 0 10 10" stroke="#080808" strokeWidth="1.800"><path d="M1 1l8 8M9 1L1 9" /></svg></IconButton>
            <Slot $w={2} />
          </TitleBar>
          <InnerTabs>
            <InnerTab $w={104} $on>GeoExport</InnerTab>
            <InnerTab $w={79}>Python</InnerTab>
            <InnerTab $w={65}>Node</InnerTab>
          </InnerTabs>
          <Form>
            <Label htmlFor="format">Format</Label>
            <Drop id="format" value="usd" w={70} h={27} pad={5} r={8} raised />
            <Label htmlFor="file">File</Label>
            <FileRow>
              <Field id="file" $h={28} defaultValue="c:/Users/Documents/Practice/ExportAll.usd" />
              <svg width="19" height="18" viewBox="0 0 19 18"><path d="M0 1h19v16H2L0 15z" fill="#c8c8c8" /><path d="M9 0h8v2H9z" fill="#555" /><path d="M2 4h14l2 13H4z" fill="#000" /><path d="M0 3h2l2 14H2L0 15z" fill="#444" /></svg>
            </FileRow>
            <span />
            <CheckRow><Check id="stitched" type="checkbox" defaultChecked /><label htmlFor="stitched">Stitched Export</label></CheckRow>
            <span />
            <Execute type="button">Execute</Execute>
            <Heading>USD Options</Heading>
            <Rule />
            <Label htmlFor="method">Export Method</Label>
            <Highlight><Drop id="method" value="Flatten All" w={281} h={27} pad={5} r={9} raised /></Highlight>
            <Label htmlFor="encoding">Format</Label>
            <Drop id="encoding" value="ASCII" w={76} h={27} pad={5} r={8} raised />
          </Form>
          <GripRow><Grip width="10" height="10" viewBox="0 0 10 10" fill="#888"><path d="M8 0h2v2H8zM4 4h3v3H4zM8 4h2v3H8zM1 8h2v2H1zM4 8h3v2H4zM8 8h2v2H8z" /></Grip></GripRow>
        </Panel>
      </RightPane>
    </Page>
  );
}
